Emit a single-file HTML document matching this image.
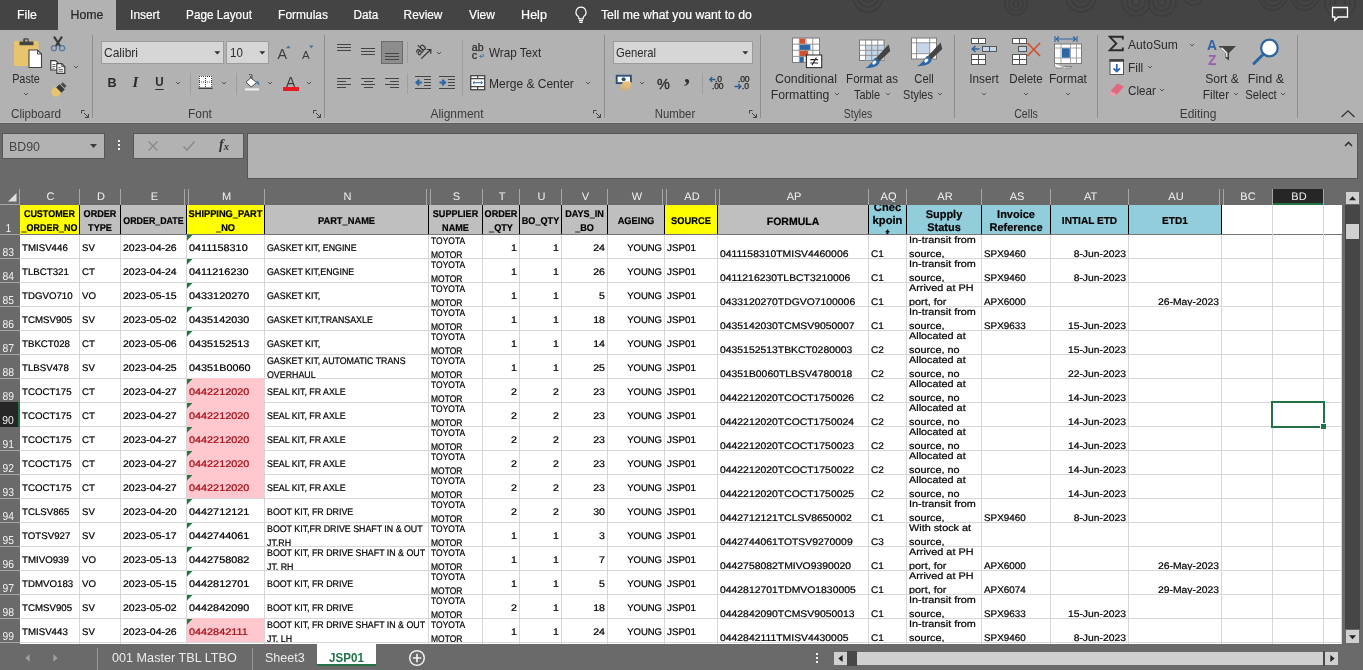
<!DOCTYPE html>
<html><head><meta charset="utf-8"><title>Excel</title>
<style>
*{box-sizing:border-box;margin:0;padding:0}
html,body{width:1363px;height:670px;overflow:hidden;background:#6a6a6a;font-family:"Liberation Sans",sans-serif}
.a{position:absolute}
#root{position:relative;width:1363px;height:670px;overflow:hidden;background:#6a6a6a;will-change:transform}
/* grid */
.ch{text-rendering:geometricPrecision;padding-left:2px;height:17px;line-height:19px;color:#f2f2f2;font-size:11px;text-align:center}
.rh{text-rendering:geometricPrecision;width:20px;color:#f2f2f2;font-size:11.5px;text-align:center;overflow:hidden}
.rh span{position:absolute;left:-4px;right:-0.6px;bottom:0px;line-height:12px;transform:scaleX(.9)}
.c{text-rendering:geometricPrecision;font-size:9.6px;color:#000;-webkit-text-stroke:0.22px currentColor;overflow:hidden;white-space:nowrap}
.c span{position:absolute;left:2px;right:2px;line-height:14px}
.c.l span{text-align:left;transform-origin:left center}
.c.r span{text-align:right;transform-origin:right center}
.c.m span{top:13.6px;transform:translateY(-50%) scaleX(var(--k))}
.c.b span{bottom:-4.4px;transform:scaleX(var(--k))}
.c.s{font-size:9.6px}
.c.pk{color:#a40c14}
.h1{text-rendering:geometricPrecision;-webkit-text-stroke:0.2px #000;font-weight:bold;text-align:center;color:#000;overflow:hidden;border-right:1px solid #000;white-space:nowrap}
.h1 span{position:absolute;left:-40px;right:-40px;top:calc(50% + var(--dy,1px) + 1px);transform:translateY(-50%) scaleX(var(--k));line-height:var(--lh,14px)}
/* top */
.tab{-webkit-text-stroke:0.2px currentColor;top:0px;height:30px;line-height:30px;color:#fff;font-size:12.3px;text-align:center;white-space:nowrap}
.rt{font-size:12.2px;color:#2b2b2b;white-space:nowrap;line-height:16px}
.gl{font-size:12.2px;color:#3b3b3b;white-space:nowrap;text-align:center;line-height:16px}
.vsep{width:1px;background:#8f8f8f}
.chev{width:7px;height:4px}
</style></head><body><div id="root">
<!-- tab bar -->
<div class="a" style="left:0;top:0;width:1363px;height:30px;background:#444"></div>
<svg class="a" style="left:840px;top:0px" width="523" height="30" viewBox="0 0 523 30"><g transform="translate(-840,0)"><circle cx="868" cy="-3" r="5" fill="none" stroke="#3d3d3d" stroke-width="1.6"/><circle cx="868" cy="-3" r="10" fill="none" stroke="#3d3d3d" stroke-width="1.6"/><circle cx="868" cy="-3" r="15" fill="none" stroke="#3d3d3d" stroke-width="1.6"/><circle cx="1016" cy="4" r="3" fill="none" stroke="#3d3d3d" stroke-width="1.6"/><circle cx="1016" cy="4" r="7" fill="none" stroke="#3d3d3d" stroke-width="1.6"/><circle cx="1016" cy="4" r="11" fill="none" stroke="#3d3d3d" stroke-width="1.6"/><circle cx="1081" cy="-3" r="5" fill="none" stroke="#3d3d3d" stroke-width="1.6"/><circle cx="1081" cy="-3" r="10" fill="none" stroke="#3d3d3d" stroke-width="1.6"/><circle cx="1081" cy="-3" r="15" fill="none" stroke="#3d3d3d" stroke-width="1.6"/><circle cx="1136" cy="2" r="4" fill="none" stroke="#3d3d3d" stroke-width="1.6"/><circle cx="1136" cy="2" r="9" fill="none" stroke="#3d3d3d" stroke-width="1.6"/><circle cx="1136" cy="2" r="14" fill="none" stroke="#3d3d3d" stroke-width="1.6"/><circle cx="1162" cy="2" r="4" fill="none" stroke="#3d3d3d" stroke-width="1.6"/><circle cx="1162" cy="2" r="9" fill="none" stroke="#3d3d3d" stroke-width="1.6"/><circle cx="1162" cy="2" r="14" fill="none" stroke="#3d3d3d" stroke-width="1.6"/><circle cx="1193" cy="-5" r="5" fill="none" stroke="#3d3d3d" stroke-width="1.6"/><circle cx="1193" cy="-5" r="10" fill="none" stroke="#3d3d3d" stroke-width="1.6"/><circle cx="1273" cy="-4" r="5" fill="none" stroke="#3d3d3d" stroke-width="1.6"/><circle cx="1273" cy="-4" r="10" fill="none" stroke="#3d3d3d" stroke-width="1.6"/><circle cx="1273" cy="-4" r="14" fill="none" stroke="#3d3d3d" stroke-width="1.6"/><circle cx="1305" cy="-4" r="5" fill="none" stroke="#3d3d3d" stroke-width="1.6"/><circle cx="1305" cy="-4" r="10" fill="none" stroke="#3d3d3d" stroke-width="1.6"/><circle cx="1305" cy="-4" r="14" fill="none" stroke="#3d3d3d" stroke-width="1.6"/><circle cx="1340" cy="3" r="5" fill="none" stroke="#3d3d3d" stroke-width="1.6"/><circle cx="1340" cy="3" r="10" fill="none" stroke="#3d3d3d" stroke-width="1.6"/><circle cx="1340" cy="3" r="15" fill="none" stroke="#3d3d3d" stroke-width="1.6"/></g></svg>
<div class="a" style="left:58px;top:0;width:58px;height:30px;background:#b2b2b2"></div>
<div class="a tab" style="left:-23.5px;width:100px;color:#fff;transform:scaleX(0.999)">File</div>
<div class="a tab" style="left:37px;width:100px;color:#262626;transform:scaleX(1.000)">Home</div>
<div class="a tab" style="left:94.5px;width:100px;color:#fff;transform:scaleX(0.969)">Insert</div>
<div class="a tab" style="left:168.5px;width:100px;color:#fff;transform:scaleX(0.953)">Page Layout</div>
<div class="a tab" style="left:252.5px;width:100px;color:#fff;transform:scaleX(0.972)">Formulas</div>
<div class="a tab" style="left:316px;width:100px;color:#fff;transform:scaleX(0.954)">Data</div>
<div class="a tab" style="left:373px;width:100px;color:#fff;transform:scaleX(0.962)">Review</div>
<div class="a tab" style="left:431.5px;width:100px;color:#fff;transform:scaleX(0.976)">View</div>
<div class="a tab" style="left:483.5px;width:100px;color:#fff;transform:scaleX(1.020)">Help</div>
<div class="a tab" style="left:600.6px;width:170px;text-align:left;white-space:nowrap;transform:scaleX(0.994);transform-origin:left">Tell me what you want to do</div>
<svg class="a" style="left:573px;top:6px" width="16" height="18" viewBox="0 0 16 18"><path d="M8 1.2a5 5 0 0 0-3 9c.6.6.9 1.2.9 2v.6h4.2v-.6c0-.8.3-1.4.9-2a5 5 0 0 0-3-9z" fill="none" stroke="#fff" stroke-width="1.2"/><path d="M6 14.6h4M6.4 16.4h3.2" stroke="#fff" stroke-width="1.1"/></svg>
<svg class="a" style="left:1331px;top:6px" width="18" height="16" viewBox="0 0 18 16"><path d="M1.5 1.5H16.5V11H7L3.8 14.3V11H1.5Z" fill="none" stroke="#fff" stroke-width="1.3"/></svg>
<!-- ribbon -->
<div class="a" style="left:0;top:30px;width:1363px;height:93px;background:#b2b2b2"></div>
<div class="a" style="left:0;top:122px;width:1363px;height:1px;background:#bbbbbb"></div>
<div class="a" style="left:92px;top:35px;width:1px;height:83px;background:#8e8e8e"></div>
<div class="a" style="left:324px;top:35px;width:1px;height:83px;background:#8e8e8e"></div>
<div class="a" style="left:604px;top:35px;width:1px;height:83px;background:#8e8e8e"></div>
<div class="a" style="left:760px;top:35px;width:1px;height:83px;background:#8e8e8e"></div>
<div class="a" style="left:954px;top:35px;width:1px;height:83px;background:#8e8e8e"></div>
<div class="a" style="left:1097px;top:35px;width:1px;height:83px;background:#8e8e8e"></div>
<div class="a" style="left:1297px;top:35px;width:1px;height:83px;background:#8e8e8e"></div>
<div class="a gl" style="left:-23.6px;width:120px;text-align:center;top:106.3px;transform:scaleX(0.960);">Clipboard</div>
<div class="a gl" style="left:140.3px;width:120px;text-align:center;top:106.3px;transform:scaleX(0.980);">Font</div>
<div class="a gl" style="left:396.8px;width:120px;text-align:center;top:106.3px;transform:scaleX(0.980);">Alignment</div>
<div class="a gl" style="left:614.5px;width:120px;text-align:center;top:106.3px;transform:scaleX(0.934);">Number</div>
<div class="a gl" style="left:797.6px;width:120px;text-align:center;top:106.3px;transform:scaleX(0.852);">Styles</div>
<div class="a gl" style="left:966px;width:120px;text-align:center;top:106.3px;transform:scaleX(0.871);">Cells</div>
<div class="a gl" style="left:1137.5px;width:120px;text-align:center;top:106.3px;transform:scaleX(0.985);">Editing</div>
<svg class="a" style="left:81px;top:110px" width="9" height="9"><path d="M0.5 3.5V0.5H3.5M3 3L7.5 7.5M7.5 4V7.5H4" stroke="#444" stroke-width="1" fill="none"/></svg>
<svg class="a" style="left:313px;top:110px" width="9" height="9"><path d="M0.5 3.5V0.5H3.5M3 3L7.5 7.5M7.5 4V7.5H4" stroke="#444" stroke-width="1" fill="none"/></svg>
<svg class="a" style="left:593px;top:110px" width="9" height="9"><path d="M0.5 3.5V0.5H3.5M3 3L7.5 7.5M7.5 4V7.5H4" stroke="#444" stroke-width="1" fill="none"/></svg>
<svg class="a" style="left:749px;top:110px" width="9" height="9"><path d="M0.5 3.5V0.5H3.5M3 3L7.5 7.5M7.5 4V7.5H4" stroke="#444" stroke-width="1" fill="none"/></svg>
<svg class="a" style="left:1340px;top:109px" width="16" height="10" viewBox="0 0 16 10"><path d="M1.5 8L8 1.8L14.5 8" stroke="#333" stroke-width="1.3" fill="none"/></svg>
<svg class="a" style="left:12px;top:36px" width="32" height="34" viewBox="0 0 32 34"><rect x="2" y="5" width="24.5" height="25" rx="1" fill="#e9c46e"/><path d="M7.5 9.3V5.6H11.3V3.2a1 1 0 0 1 1-1h3.4a1 1 0 0 1 1 1V5.6H21.5V9.3Z" fill="#444"/><rect x="13" y="3.6" width="2.6" height="1.8" fill="#b2b2b2"/><path d="M17 14H25.5L29.5 18V31.5H17Z" fill="#fff" stroke="#444" stroke-width="1.1"/><path d="M25.5 14V18H29.5" fill="none" stroke="#444" stroke-width="1"/></svg>
<div class="a rt" style="left:-33.7px;width:120px;text-align:center;top:71.3px;transform:scaleX(0.889);">Paste</div>
<svg class="a" style="left:22.3px;top:91px" width="8" height="6"><path d="M1.900 1.900L4 4L6.100 1.900" stroke="#555" stroke-width="1" fill="none"/></svg>
<svg class="a" style="left:49px;top:35px" width="18" height="18" viewBox="0 0 18 18"><path d="M5 1.600L11.300 11.400M13 1.600L6.700 11.400" stroke="#3a3a3a" stroke-width="2.100" fill="none"/><circle cx="4.900" cy="13.200" r="2.500" fill="none" stroke="#54789e" stroke-width="1.300"/><circle cx="13.100" cy="13.200" r="2.500" fill="none" stroke="#54789e" stroke-width="1.300"/></svg>
<svg class="a" style="left:49px;top:59px" width="18" height="16" viewBox="0 0 18 16"><path d="M1.800 1.600H6.600L9.400 4.400V11H1.800Z" fill="#fff" stroke="#3a3a3a" stroke-width="1.200"/><path d="M3.400 5.500H6.400M3.400 7.500H6.400M3.400 9.300H5.400" stroke="#3a3a3a" stroke-width="0.800"/><path d="M7.800 4.700H12.800L15.800 7.700V14.400H7.800Z" fill="#fff" stroke="#3a3a3a" stroke-width="1.200"/><path d="M12.800 4.700V7.700H15.800" fill="none" stroke="#3a3a3a" stroke-width="0.900"/><path d="M9.400 8.600H11.600M9.400 10.400H14.200M9.400 12.200H14.200" stroke="#3a3a3a" stroke-width="0.800"/></svg>
<svg class="a" style="left:72px;top:64px" width="8" height="6"><path d="M1.900 1.900L4 4L6.100 1.900" stroke="#555" stroke-width="1" fill="none"/></svg>
<svg class="a" style="left:50px;top:81px" width="18" height="18" viewBox="0 0 18 18"><circle cx="6" cy="11" r="4.700" fill="#e9c46e"/><path d="M9.600 3.200L14.800 8.400L11.400 11.800L6.200 6.600Z" fill="#3a3a3a"/><path d="M12.800 1.200L16.600 5L14.600 7L10.800 3.200Z" fill="#46504a"/></svg>
<div class="a" style="left:101px;top:41px;width:123px;height:23px;background:#d6d6d6;border:1px solid #9b9b9b"></div>
<div class="a rt" style="left:104.4px;top:44.9px;transform:scaleX(0.984);transform-origin:left;">Calibri</div>
<svg class="a" style="left:213.5px;top:51px" width="7" height="4"><path d="M0.300 0.300H6.300L3.300 3.600Z" fill="#333"/></svg>
<div class="a" style="left:226px;top:41px;width:43px;height:23px;background:#d6d6d6;border:1px solid #9b9b9b"></div>
<div class="a rt" style="left:229.6px;top:44.9px;transform:scaleX(0.944);transform-origin:left;">10</div>
<svg class="a" style="left:258.5px;top:51px" width="7" height="4"><path d="M0.300 0.300H6.300L3.300 3.600Z" fill="#333"/></svg>
<div class="a" style="left:277.500px;top:44.500px;font-size:14.300px;line-height:18px;color:#3b3b3b">A</div>
<svg class="a" style="left:285.5px;top:44.5px" width="5" height="4" viewBox="0 0 5 4"><path d="M0 3.300H4.600L2.300 0.400Z" fill="#41719c"/></svg>
<div class="a" style="left:302px;top:47.500px;font-size:11.500px;line-height:14px;color:#3b3b3b">A</div>
<svg class="a" style="left:309.2px;top:44.5px" width="5" height="4" viewBox="0 0 5 4"><path d="M0 0.400H4.600L2.300 3.300Z" fill="#41719c"/></svg>
<div class="a" style="left:107.500px;top:75px;font-size:12.600px;font-weight:bold;line-height:16px;color:#2b2b2b">B</div>
<div class="a" style="left:132.500px;top:74px;font-family:'Liberation Serif',serif;font-size:15px;font-style:italic;font-weight:bold;line-height:16px;color:#2b2b2b">I</div>
<div class="a" style="left:155px;top:75.500px;font-size:12.600px;font-weight:bold;line-height:13px;color:#2b2b2b;border-bottom:1.3px solid #2b2b2b;padding:0 0px;transform:scaleX(.92)">U</div>
<svg class="a" style="left:174px;top:80px" width="8" height="6"><path d="M1.900 1.900L4 4L6.100 1.900" stroke="#555" stroke-width="1" fill="none"/></svg>
<div class="a" style="left:190px;top:73px;width:1px;height:22px;background:#9e9e9e"></div>
<svg class="a" style="left:198px;top:75px" width="15" height="15" viewBox="0 0 15 15"><rect x="1" y="1" width="13" height="12" fill="#fff"/><path d="M1 1.5H14M1.5 1V13M13.5 1V13M7.5 1V13M1 7H14" stroke="#444" stroke-width="1" stroke-dasharray="1 1" fill="none"/><path d="M0.5 13.2H14.5" stroke="#333" stroke-width="1.4"/></svg>
<svg class="a" style="left:220px;top:80px" width="8" height="6"><path d="M1.900 1.900L4 4L6.100 1.900" stroke="#555" stroke-width="1" fill="none"/></svg>
<div class="a" style="left:236px;top:73px;width:1px;height:22px;background:#9e9e9e"></div>
<svg class="a" style="left:244px;top:74px" width="18" height="18" viewBox="0 0 18 18"><path d="M6.5 2.2V5" stroke="#444" stroke-width="1.1" fill="none"/><path d="M5 1.2a1.6 1.6 0 0 1 3 0V5" stroke="#444" stroke-width="1" fill="none"/><path d="M6.8 3.8L12.6 8.6L7.2 13L2 8.2Z" fill="#fff" stroke="#444" stroke-width="1"/><path d="M12.8 6.6c1.8 .6 3 2.6 2.4 5c-.9-1.2-1.5-1.9-2.6-2.7Z" fill="#3f78ad"/><rect x="1" y="14.3" width="14" height="2.2" fill="#efefef"/></svg>
<svg class="a" style="left:266px;top:80px" width="8" height="6"><path d="M1.900 1.900L4 4L6.100 1.900" stroke="#555" stroke-width="1" fill="none"/></svg>
<div class="a" style="left:286px;top:73.5px;font-size:14px;line-height:16px;color:#3b3b3b">A</div>
<div class="a" style="left:283px;top:87px;width:16px;height:4px;background:#e81b23"></div>
<svg class="a" style="left:305px;top:80px" width="8" height="6"><path d="M1.900 1.900L4 4L6.100 1.900" stroke="#555" stroke-width="1" fill="none"/></svg>
<div class="a" style="left:337px;top:44px;width:14px;height:1px;background:#444"></div><div class="a" style="left:337px;top:47px;width:14px;height:1px;background:#444"></div><div class="a" style="left:337px;top:50px;width:14px;height:1px;background:#444"></div>
<div class="a" style="left:361px;top:48px;width:14px;height:1px;background:#444"></div><div class="a" style="left:361px;top:51px;width:14px;height:1px;background:#444"></div><div class="a" style="left:361px;top:54px;width:14px;height:1px;background:#444"></div>
<div class="a" style="left:381px;top:41px;width:22px;height:23px;background:#8d8d8d;border:1px solid #6b6b6b"></div>
<div class="a" style="left:385px;top:53px;width:14px;height:1px;background:#444"></div><div class="a" style="left:385px;top:56px;width:14px;height:1px;background:#444"></div><div class="a" style="left:385px;top:59px;width:14px;height:1px;background:#444"></div>
<div class="a" style="left:407px;top:42px;width:1px;height:21px;background:#9e9e9e"></div>
<svg class="a" style="left:413px;top:41px" width="21" height="21" viewBox="0 0 21 21"><text x="0" y="0" font-family="Liberation Sans" font-size="11" fill="#2b2b2b" stroke="#2b2b2b" stroke-width="0.250" transform="translate(6.200 15) rotate(-47)" textLength="11.500" lengthAdjust="spacingAndGlyphs">ab</text><path d="M8.300 17.600L17.500 8.800M13.600 8.500H17.800V12.700" stroke="#333" stroke-width="1.200" fill="none"/></svg>
<svg class="a" style="left:435px;top:49.5px" width="8" height="6"><path d="M1.900 1.900L4 4L6.100 1.900" stroke="#555" stroke-width="1" fill="none"/></svg>
<div class="a" style="left:462px;top:40px;width:1px;height:56px;background:#9e9e9e"></div>
<svg class="a" style="left:471px;top:42px" width="15" height="19" viewBox="0 0 15 19"><text x="0.800" y="8.900" font-family="Liberation Sans" font-size="10.800" fill="#2b2b2b" stroke="#2b2b2b" stroke-width="0.250" textLength="11.800" lengthAdjust="spacingAndGlyphs">ab</text><text x="0.800" y="16.600" font-family="Liberation Sans" font-size="10.800" fill="#2b2b2b" stroke="#2b2b2b" stroke-width="0.250">c</text><path d="M12.300 11.800V14.400H8.800M10.200 12.900L8.600 14.400L10.200 15.900" stroke="#41719c" stroke-width="0.900" fill="none"/></svg>
<div class="a rt" style="left:489.3px;top:44.9px;transform:scaleX(0.959);transform-origin:left;">Wrap Text</div>
<div class="a" style="left:337px;top:78px;width:14px;height:1px;background:#444"></div><div class="a" style="left:337px;top:81px;width:9px;height:1px;background:#444"></div><div class="a" style="left:337px;top:84px;width:14px;height:1px;background:#444"></div><div class="a" style="left:337px;top:87px;width:9px;height:1px;background:#444"></div>
<div class="a" style="left:361.0px;top:78px;width:14px;height:1px;background:#444"></div><div class="a" style="left:363.5px;top:81px;width:9px;height:1px;background:#444"></div><div class="a" style="left:361.0px;top:84px;width:14px;height:1px;background:#444"></div><div class="a" style="left:363.5px;top:87px;width:9px;height:1px;background:#444"></div>
<div class="a" style="left:385px;top:78px;width:14px;height:1px;background:#444"></div><div class="a" style="left:390px;top:81px;width:9px;height:1px;background:#444"></div><div class="a" style="left:385px;top:84px;width:14px;height:1px;background:#444"></div><div class="a" style="left:390px;top:87px;width:9px;height:1px;background:#444"></div>
<div class="a" style="left:407px;top:73px;width:1px;height:21px;background:#9e9e9e"></div>
<div class="a" style="left:415px;top:76px;width:16px;height:1px;background:#444"></div><div class="a" style="left:423.5px;top:79px;width:7.5px;height:1px;background:#444"></div><div class="a" style="left:423.5px;top:82px;width:7.5px;height:1px;background:#444"></div><div class="a" style="left:423.5px;top:85px;width:7.5px;height:1px;background:#444"></div><div class="a" style="left:415px;top:88px;width:16px;height:1px;background:#444"></div>
<svg class="a" style="left:415px;top:78px" width="8" height="9" viewBox="0 0 8 9"><path d="M7 4.500H2M4.300 1.600L1.400 4.500L4.300 7.400" stroke="#2d66a5" stroke-width="2" fill="none"/></svg>
<div class="a" style="left:439px;top:76px;width:16px;height:1px;background:#444"></div><div class="a" style="left:447.5px;top:79px;width:7.5px;height:1px;background:#444"></div><div class="a" style="left:447.5px;top:82px;width:7.5px;height:1px;background:#444"></div><div class="a" style="left:447.5px;top:85px;width:7.5px;height:1px;background:#444"></div><div class="a" style="left:439px;top:88px;width:16px;height:1px;background:#444"></div>
<svg class="a" style="left:439px;top:78px" width="8" height="9" viewBox="0 0 8 9"><path d="M0.500 4.500H5.500M3.200 1.600L6.100 4.500L3.200 7.400" stroke="#2d66a5" stroke-width="2" fill="none"/></svg>
<svg class="a" style="left:470px;top:75px" width="16" height="16" viewBox="0 0 16 16"><rect x="0.700" y="0.700" width="14" height="14" fill="#fff" stroke="#444" stroke-width="1.300"/><path d="M0.700 3.700H14.700M0.700 11.700H14.700M7.700 0.700V3.700M7.700 11.700V14.700" stroke="#444" stroke-width="1.200" fill="none"/><path d="M3 7.700H12.400M4.600 6.200L3 7.700L4.600 9.200M10.800 6.200L12.400 7.700L10.800 9.200" stroke="#2d66a5" stroke-width="1" fill="none"/></svg>
<div class="a rt" style="left:489.3px;top:76.3px;transform:scaleX(0.986);transform-origin:left;">Merge &amp; Center</div>
<svg class="a" style="left:584px;top:80px" width="8" height="6"><path d="M1.900 1.900L4 4L6.100 1.900" stroke="#555" stroke-width="1" fill="none"/></svg>
<div class="a" style="left:613px;top:41px;width:140px;height:23px;background:#d6d6d6;border:1px solid #9b9b9b"></div>
<div class="a rt" style="left:616.4px;top:44.9px;transform:scaleX(0.925);transform-origin:left;">General</div>
<svg class="a" style="left:742px;top:51px" width="7" height="4"><path d="M0.300 0.300H6.300L3.300 3.600Z" fill="#333"/></svg>
<svg class="a" style="left:615px;top:74px" width="19" height="19" viewBox="0 0 19 19"><rect x="1.700" y="1.700" width="14.200" height="7.400" fill="#fff" stroke="#2c4f7c" stroke-width="1.900"/><circle cx="8.600" cy="5.300" r="2" fill="#2c4f7c"/><ellipse cx="12" cy="9.600" rx="4.800" ry="2.300" fill="#e9bf7c"/><ellipse cx="10.600" cy="12.400" rx="5" ry="2.300" fill="#e6ba74" opacity=".9"/><ellipse cx="9.400" cy="15" rx="4.400" ry="1.900" fill="#dcae66" opacity=".55"/></svg>
<svg class="a" style="left:638px;top:80px" width="8" height="6"><path d="M1.900 1.900L4 4L6.100 1.900" stroke="#555" stroke-width="1" fill="none"/></svg>
<div class="a" style="left:657px;top:74px;font-size:15.500px;line-height:20px;color:#2b2b2b;-webkit-text-stroke:0.350px #2b2b2b;transform:scaleX(.93);transform-origin:left">%</div>
<div class="a" style="left:684px;top:62px;font-family:'Liberation Serif',serif;font-size:24px;font-weight:bold;line-height:24px;color:#2f2f2f">,</div>
<div class="a" style="left:702px;top:73px;width:1px;height:21px;background:#9e9e9e"></div>
<div class="a" style="left:715px;top:75px;font-size:8.600px;line-height:9px;color:#262626;letter-spacing:-0.200px;-webkit-text-stroke:0.250px #262626">.0</div><div class="a" style="left:712px;top:81.5px;font-size:8.600px;line-height:9px;color:#262626;letter-spacing:-0.200px;-webkit-text-stroke:0.250px #262626">.00</div>
<svg class="a" style="left:709px;top:76px" width="7" height="7" viewBox="0 0 7 7"><path d="M6.5 3.5H1M3.2 1L0.8 3.5L3.2 6" stroke="#2b5c98" stroke-width="1.300" fill="none"/></svg>
<div class="a" style="left:738px;top:75px;font-size:8.600px;line-height:9px;color:#262626;letter-spacing:-0.200px;-webkit-text-stroke:0.250px #262626">.00</div><div class="a" style="left:742px;top:81.5px;font-size:8.600px;line-height:9px;color:#262626;letter-spacing:-0.200px;-webkit-text-stroke:0.250px #262626">.0</div>
<svg class="a" style="left:734px;top:82.5px" width="8" height="7" viewBox="0 0 8 7"><path d="M0.5 3.5H6.5M4.3 1L6.8 3.5L4.3 6" stroke="#2b5c98" stroke-width="1.300" fill="none"/></svg>
<svg class="a" style="left:792px;top:37px" width="31" height="32" viewBox="0 0 31 32"><rect x="0.5" y="1" width="27" height="24.5" fill="#fff" stroke="#7a7a7a" stroke-width="1"/><path d="M0.5 7.2H27.5M0.5 13.3H27.5M0.5 19.4H27.5M7.3 1V25.5M14 1V25.5M20.8 1V25.5" stroke="#8a8a8a" stroke-width="0.9" fill="none"/><rect x="7.8" y="1.5" width="5.4" height="5.3" fill="#d0512f"/><rect x="7.8" y="7.7" width="10.6" height="5.2" fill="#2d66a5"/><rect x="7.8" y="13.8" width="8.4" height="5.2" fill="#d0512f"/><rect x="7.8" y="19.9" width="4" height="5.2" fill="#2d66a5"/><rect x="14.5" y="18" width="15.2" height="12.6" fill="#fff" stroke="#333" stroke-width="1.1"/><path d="M18.3 22.6H26M18.3 26H26M24.4 20.4L20 28.3" stroke="#222" stroke-width="1.1" fill="none"/></svg>
<div class="a rt" style="left:746.2px;width:120px;text-align:center;top:70.7px;transform:scaleX(1.017);">Conditional</div>
<div class="a rt" style="left:740.3px;width:120px;text-align:center;top:87.4px;transform:scaleX(1.004);">Formatting</div>
<svg class="a" style="left:833.2px;top:91px" width="8" height="6"><path d="M1.900 1.900L4 4L6.100 1.900" stroke="#555" stroke-width="1" fill="none"/></svg>
<svg class="a" style="left:859px;top:39px" width="32" height="30" viewBox="0 0 32 30"><rect x="0.5" y="1" width="24.5" height="20.5" fill="#fff" stroke="#7a7a7a" stroke-width="1"/><rect x="6.6" y="6.2" width="18" height="15" fill="#c5d6ea"/><path d="M0.5 6.2H25M0.5 11.3H25M0.5 16.4H25M6.6 1V21.5M12.7 1V21.5M18.8 1V21.5" stroke="#8a8a8a" stroke-width="0.9" fill="none"/><path d="M29.600 5.500L31.300 12L20.300 22.600L16.800 19.200Z" fill="#444"/><path d="M16.500 18.700L20.800 23c-1.200 3.800-6 6.200-14.800 6.200c4.300-2.200 5.800-4.800 8.300-8.200c.8-1.200 1.500-2 2.200-2.300Z" fill="#2d66a5"/><ellipse cx="15.300" cy="23.6" rx="2.300" ry="1.600" fill="#fff" transform="rotate(-40 15.300 23.6)"/></svg>
<div class="a rt" style="left:812.1px;width:120px;text-align:center;top:70.7px;transform:scaleX(0.944);">Format as</div>
<div class="a rt" style="left:807.2px;width:120px;text-align:center;top:87.4px;transform:scaleX(0.896);">Table</div>
<svg class="a" style="left:883.5px;top:91px" width="8" height="6"><path d="M1.900 1.900L4 4L6.100 1.900" stroke="#555" stroke-width="1" fill="none"/></svg>
<svg class="a" style="left:911px;top:37px" width="32" height="31" viewBox="0 0 32 31"><rect x="0.5" y="1" width="25" height="21" fill="#fff" stroke="#7a7a7a" stroke-width="1"/><rect x="5.600" y="6" width="13" height="10.500" fill="#c5d6ea"/><path d="M0.5 5.8H25.5M0.5 16.700H25.5M5.5 1V22M18.700 1V22" stroke="#8a8a8a" stroke-width="0.9" fill="none"/><path d="M29.600 5.500L31.300 12L20.300 22.600L16.800 19.200Z" fill="#444"/><path d="M16.500 18.700L20.800 23c-1.200 3.800-6 6.200-14.800 6.200c4.300-2.200 5.800-4.800 8.300-8.200c.8-1.200 1.500-2 2.200-2.300Z" fill="#2d66a5"/><ellipse cx="15.300" cy="23.6" rx="2.300" ry="1.600" fill="#fff" transform="rotate(-40 15.300 23.6)"/></svg>
<div class="a rt" style="left:864.2px;width:120px;text-align:center;top:70.7px;transform:scaleX(0.919);">Cell</div>
<div class="a rt" style="left:858px;width:120px;text-align:center;top:87.4px;transform:scaleX(0.898);">Styles</div>
<svg class="a" style="left:936.3px;top:91px" width="8" height="6"><path d="M1.900 1.900L4 4L6.100 1.900" stroke="#555" stroke-width="1" fill="none"/></svg>
<svg class="a" style="left:970px;top:37px" width="29" height="29" viewBox="0 0 29 29"><rect x="1.5" y="1.5" width="7" height="5" fill="#fff" stroke="#555" stroke-width="1"/><rect x="8.5" y="1.5" width="7" height="5" fill="#fff" stroke="#555" stroke-width="1"/><rect x="12.5" y="9.5" width="7" height="5" fill="#c5d6ea" stroke="#555" stroke-width="1"/><rect x="19.5" y="9.5" width="7" height="5" fill="#c5d6ea" stroke="#555" stroke-width="1"/><rect x="1.5" y="17.5" width="7" height="5" fill="#fff" stroke="#555" stroke-width="1"/><rect x="8.5" y="17.5" width="7" height="5" fill="#fff" stroke="#555" stroke-width="1"/><rect x="1.5" y="22.5" width="7" height="5" fill="#fff" stroke="#555" stroke-width="1"/><rect x="8.5" y="22.5" width="7" height="5" fill="#fff" stroke="#555" stroke-width="1"/><path d="M9.500 12H2.500M5.500 9L2.300 12L5.500 15" stroke="#2d66a5" stroke-width="1.6" fill="none"/></svg>
<div class="a rt" style="left:923.7px;width:120px;text-align:center;top:70.7px;transform:scaleX(0.964);">Insert</div>
<svg class="a" style="left:979.7px;top:91px" width="8" height="6"><path d="M1.900 1.900L4 4L6.100 1.900" stroke="#555" stroke-width="1" fill="none"/></svg>
<svg class="a" style="left:1011px;top:37px" width="31" height="29" viewBox="0 0 31 29"><rect x="1.5" y="1.5" width="7" height="5" fill="#fff" stroke="#555" stroke-width="1"/><rect x="8.5" y="1.5" width="7" height="5" fill="#fff" stroke="#555" stroke-width="1"/><rect x="7.5" y="9.5" width="8" height="5" fill="#c5d6ea" stroke="#555" stroke-width="1"/><rect x="1.5" y="17.5" width="7" height="5" fill="#fff" stroke="#555" stroke-width="1"/><rect x="8.5" y="17.5" width="7" height="5" fill="#fff" stroke="#555" stroke-width="1"/><rect x="1.5" y="22.5" width="7" height="5" fill="#fff" stroke="#555" stroke-width="1"/><rect x="8.5" y="22.5" width="7" height="5" fill="#fff" stroke="#555" stroke-width="1"/><path d="M16.500 6L29 19M29 6L16.500 19" stroke="#d0512f" stroke-width="1.700" fill="none"/></svg>
<div class="a rt" style="left:965.7px;width:120px;text-align:center;top:70.7px;transform:scaleX(0.948);">Delete</div>
<svg class="a" style="left:1022px;top:91px" width="8" height="6"><path d="M1.900 1.900L4 4L6.100 1.900" stroke="#555" stroke-width="1" fill="none"/></svg>
<svg class="a" style="left:1053px;top:35px" width="31" height="34" viewBox="0 0 31 34"><path d="M2 1V7M24 1V7M3 4H23M6 1.500L3.200 4L6 6.500M20 1.500L22.800 4L20 6.500" stroke="#2d66a5" stroke-width="1.100" fill="none"/><rect x="1.5" y="9" width="27" height="19.500" fill="#fff" stroke="#7a7a7a" stroke-width="1"/><path d="M1.5 13H28.500M1.5 23H28.500M8 9V28.500M17.500 9V28.500M23.500 9V28.500" stroke="#9a9a9a" stroke-width="0.9" fill="none"/><rect x="9" y="13.300" width="7.800" height="9.400" fill="#2d66a5"/><path d="M1.5 28.500V31.500L4 33H9.500L11 31.500H19L17.500 33H12" fill="#fff" stroke="#7a7a7a" stroke-width="0.9"/></svg>
<div class="a rt" style="left:1008.0999999999999px;width:120px;text-align:center;top:70.7px;transform:scaleX(0.982);">Format</div>
<svg class="a" style="left:1063.8px;top:91px" width="8" height="6"><path d="M1.900 1.900L4 4L6.100 1.900" stroke="#555" stroke-width="1" fill="none"/></svg>
<svg class="a" style="left:1108px;top:35px" width="17" height="17" viewBox="0 0 17 17"><path d="M14.800 4.500V1.800H1.800L8.300 8.500L1.800 15.200H14.800V12.500" stroke="#2b2b2b" stroke-width="1.900" fill="none" stroke-linejoin="miter"/></svg>
<div class="a rt" style="left:1127.6px;top:37.3px;transform:scaleX(0.993);transform-origin:left;">AutoSum</div>
<svg class="a" style="left:1188px;top:41.5px" width="8" height="6"><path d="M1.900 1.900L4 4L6.100 1.900" stroke="#555" stroke-width="1" fill="none"/></svg>
<svg class="a" style="left:1109px;top:58px" width="16" height="18" viewBox="0 0 16 18"><rect x="1" y="2" width="13.500" height="14.500" fill="#fff" stroke="#555" stroke-width="1"/><rect x="0.5" y="1" width="14.500" height="2.800" fill="#444"/><path d="M7.800 6V13.500M4.500 10.300L7.800 13.600L11 10.300" stroke="#2d66a5" stroke-width="1.700" fill="none"/></svg>
<div class="a rt" style="left:1127.6px;top:59.9px;transform:scaleX(0.976);transform-origin:left;">Fill</div>
<svg class="a" style="left:1146px;top:64px" width="8" height="6"><path d="M1.900 1.900L4 4L6.100 1.900" stroke="#555" stroke-width="1" fill="none"/></svg>
<svg class="a" style="left:1109px;top:82px" width="16" height="15" viewBox="0 0 16 15"><path d="M8.500 1.200L14.800 4.800L7.800 12.500L1.500 9Z" fill="#e0697e"/><path d="M1.500 9L7.800 12.500L6.800 13.800H2.500L1 12.200Z" fill="#ee9aa8"/></svg>
<div class="a rt" style="left:1127.6px;top:82.9px;transform:scaleX(0.955);transform-origin:left;">Clear</div>
<svg class="a" style="left:1158px;top:87px" width="8" height="6"><path d="M1.900 1.900L4 4L6.100 1.900" stroke="#555" stroke-width="1" fill="none"/></svg>
<div class="a" style="left:1207px;top:36.500px;font-size:14.500px;font-weight:bold;line-height:16px;color:#2d66a5;transform:scaleX(.95);transform-origin:left">A</div>
<div class="a" style="left:1207.500px;top:51.500px;font-size:14.500px;font-weight:bold;line-height:16px;color:#9a5cb4;transform:scaleX(.95);transform-origin:left">Z</div>
<svg class="a" style="left:1218px;top:45px" width="19" height="17" viewBox="0 0 19 17"><path d="M0.500 1H18L11 8V15.500L7.500 13V8Z" fill="#444"/><path d="M3.500 2.800L8.800 8V12" stroke="#fff" stroke-width="1.300" fill="none"/></svg>
<div class="a rt" style="left:1161.8px;width:120px;text-align:center;top:70.7px;transform:scaleX(0.995);">Sort &amp;</div>
<div class="a rt" style="left:1156.2px;width:120px;text-align:center;top:87.1px;transform:scaleX(0.971);">Filter</div>
<svg class="a" style="left:1231.5px;top:91px" width="8" height="6"><path d="M1.900 1.900L4 4L6.100 1.900" stroke="#555" stroke-width="1" fill="none"/></svg>
<svg class="a" style="left:1251px;top:36px" width="30" height="30" viewBox="0 0 30 30"><circle cx="18.400" cy="12" r="8.300" fill="#fff" stroke="#2b66a3" stroke-width="2.200"/><path d="M12.300 18.200L3 27.500" stroke="#2b66a3" stroke-width="3" stroke-linecap="round"/></svg>
<div class="a rt" style="left:1205.7px;width:120px;text-align:center;top:70.7px;transform:scaleX(1.030);">Find &amp;</div>
<div class="a rt" style="left:1200.7px;width:120px;text-align:center;top:87.1px;transform:scaleX(0.924);">Select</div>
<svg class="a" style="left:1279px;top:91px" width="8" height="6"><path d="M1.900 1.900L4 4L6.100 1.900" stroke="#555" stroke-width="1" fill="none"/></svg>
<!-- formula bar -->
<div class="a" style="left:0;top:123px;width:1363px;height:1px;background:#5e5e5e"></div>
<div class="a" style="left:2px;top:133px;width:103px;height:26px;background:#b2b2b2;border:1px solid #565656"></div>
<div class="a" style="left:9px;top:139px;font-size:13.5px;color:#444;line-height:16px;transform:scaleX(.915);transform-origin:left">BD90</div>
<svg class="a" style="left:90px;top:144px" width="7" height="4"><path d="M0 0H7L3.5 4Z" fill="#3c3c3c"/></svg>
<div class="a" style="left:118px;top:140px;width:2px;height:2px;background:#f0f0f0;box-shadow:0 4px 0 #f0f0f0,0 8px 0 #f0f0f0"></div>
<div class="a" style="left:133px;top:133px;width:111px;height:26px;background:#b2b2b2;border:1px solid #565656"></div>
<svg class="a" style="left:147px;top:140px" width="12" height="12"><path d="M1.5 1.5L10.5 10.5M10.5 1.5L1.5 10.5" stroke="#8a8a8a" stroke-width="1.4" fill="none"/></svg>
<svg class="a" style="left:182px;top:140px" width="14" height="12"><path d="M1.5 6.5L5 10L12.5 1.5" stroke="#8a8a8a" stroke-width="1.6" fill="none"/></svg>
<div class="a" style="left:219px;top:137px;font-family:'Liberation Serif',serif;font-style:italic;font-size:14px;color:#333;line-height:16px;font-weight:bold">f<span style="font-size:10.5px;position:relative;top:1px;left:0px">x</span></div>
<div class="a" style="left:247px;top:133px;width:1111px;height:46px;background:#b2b2b2;border:1px solid #565656"></div>
<svg class="a" style="left:1344px;top:141px" width="9" height="6"><path d="M1 5L4.5 1.5L8 5" stroke="#333" stroke-width="1.6" fill="none"/></svg>
<!-- grid -->
<div class="a" style="left:20px;top:205px;width:1322px;height:439px;background:#fff"></div>
<div class="a ch" style="left:20px;top:188px;width:59px">C</div>
<div class="a ch" style="left:80px;top:188px;width:40px">D</div>
<div class="a ch" style="left:121px;top:188px;width:65px">E</div>
<div class="a ch" style="left:187px;top:188px;width:77px">M</div>
<div class="a ch" style="left:265px;top:188px;width:163px">N</div>
<div class="a ch" style="left:429px;top:188px;width:53px">S</div>
<div class="a ch" style="left:483px;top:188px;width:36px">T</div>
<div class="a ch" style="left:520px;top:188px;width:41px">U</div>
<div class="a ch" style="left:562px;top:188px;width:45px">V</div>
<div class="a ch" style="left:608px;top:188px;width:56px">W</div>
<div class="a ch" style="left:665px;top:188px;width:52px">AD</div>
<div class="a ch" style="left:718px;top:188px;width:150px">AP</div>
<div class="a ch" style="left:869px;top:188px;width:37px">AQ</div>
<div class="a ch" style="left:907px;top:188px;width:74px">AR</div>
<div class="a ch" style="left:982px;top:188px;width:68px">AS</div>
<div class="a ch" style="left:1051px;top:188px;width:77px">AT</div>
<div class="a ch" style="left:1129px;top:188px;width:92px">AU</div>
<div class="a ch" style="left:1222px;top:188px;width:50px">BC</div>
<div class="a ch" style="left:1273px;top:189px;width:50px;height:16px;line-height:17px;background:#262626;border-bottom:2px solid #217346">BD</div>
<div class="a" style="left:19px;top:189px;width:1px;height:16px;background:#a6a6a6"></div>
<div class="a" style="left:79px;top:189px;width:1px;height:16px;background:#a6a6a6"></div>
<div class="a" style="left:120px;top:189px;width:1px;height:16px;background:#a6a6a6"></div>
<div class="a" style="left:186px;top:189px;width:1px;height:16px;background:#a6a6a6"></div>
<div class="a" style="left:264px;top:189px;width:1px;height:16px;background:#a6a6a6"></div>
<div class="a" style="left:428px;top:189px;width:1px;height:16px;background:#a6a6a6"></div>
<div class="a" style="left:482px;top:189px;width:1px;height:16px;background:#a6a6a6"></div>
<div class="a" style="left:519px;top:189px;width:1px;height:16px;background:#a6a6a6"></div>
<div class="a" style="left:561px;top:189px;width:1px;height:16px;background:#a6a6a6"></div>
<div class="a" style="left:607px;top:189px;width:1px;height:16px;background:#a6a6a6"></div>
<div class="a" style="left:664px;top:189px;width:1px;height:16px;background:#a6a6a6"></div>
<div class="a" style="left:717px;top:189px;width:1px;height:16px;background:#a6a6a6"></div>
<div class="a" style="left:868px;top:189px;width:1px;height:16px;background:#a6a6a6"></div>
<div class="a" style="left:906px;top:189px;width:1px;height:16px;background:#a6a6a6"></div>
<div class="a" style="left:981px;top:189px;width:1px;height:16px;background:#a6a6a6"></div>
<div class="a" style="left:1050px;top:189px;width:1px;height:16px;background:#a6a6a6"></div>
<div class="a" style="left:1128px;top:189px;width:1px;height:16px;background:#a6a6a6"></div>
<div class="a" style="left:1221px;top:189px;width:1px;height:16px;background:#a6a6a6"></div>
<div class="a" style="left:1272px;top:189px;width:1px;height:16px;background:#a6a6a6"></div>
<div class="a" style="left:1323px;top:189px;width:1px;height:16px;background:#a6a6a6"></div>
<div class="a" style="left:184px;top:189px;width:1px;height:16px;background:#a6a6a6"></div>
<div class="a" style="left:188px;top:189px;width:1px;height:16px;background:#a6a6a6"></div>
<div class="a" style="left:186px;top:189px;width:1px;height:16px;background:#6a6a6a"></div>
<div class="a" style="left:426px;top:189px;width:1px;height:16px;background:#a6a6a6"></div>
<div class="a" style="left:430px;top:189px;width:1px;height:16px;background:#a6a6a6"></div>
<div class="a" style="left:428px;top:189px;width:1px;height:16px;background:#6a6a6a"></div>
<div class="a" style="left:662px;top:189px;width:1px;height:16px;background:#a6a6a6"></div>
<div class="a" style="left:666px;top:189px;width:1px;height:16px;background:#a6a6a6"></div>
<div class="a" style="left:664px;top:189px;width:1px;height:16px;background:#6a6a6a"></div>
<div class="a" style="left:715px;top:189px;width:1px;height:16px;background:#a6a6a6"></div>
<div class="a" style="left:719px;top:189px;width:1px;height:16px;background:#a6a6a6"></div>
<div class="a" style="left:717px;top:189px;width:1px;height:16px;background:#6a6a6a"></div>
<div class="a" style="left:1219px;top:189px;width:1px;height:16px;background:#a6a6a6"></div>
<div class="a" style="left:1223px;top:189px;width:1px;height:16px;background:#a6a6a6"></div>
<div class="a" style="left:1221px;top:189px;width:1px;height:16px;background:#6a6a6a"></div>
<svg class="a" style="left:8px;top:193px" width="9" height="9"><path d="M8.5 0V8.5H0Z" fill="#dedede"/></svg>
<div class="a" style="left:0;top:204px;width:20px;height:1px;background:#a6a6a6"></div>
<div class="a rh" style="left:0;top:205px;height:30px"><span>1</span></div>
<div class="a" style="left:0;top:234px;width:20px;height:1px;background:#a6a6a6"></div>
<div class="a h1" style="left:20px;top:205px;width:60px;height:29px;background:#ffff00;font-size:9.8px;--k:0.915;--dy:1px;--lh:14px"><span>CUSTOMER<br>_ORDER_NO</span></div>
<div class="a h1" style="left:80px;top:205px;width:41px;height:29px;background:#bfbfbf;font-size:9.8px;--k:0.929;--dy:1px;--lh:14px"><span>ORDER<br>TYPE</span></div>
<div class="a h1" style="left:121px;top:205px;width:66px;height:29px;background:#bfbfbf;font-size:9.8px;--k:0.903;--dy:1px;--lh:14px"><span>ORDER_DATE</span></div>
<div class="a h1" style="left:187px;top:205px;width:78px;height:29px;background:#ffff00;font-size:9.8px;--k:0.944;--dy:1px;--lh:14px"><span>SHIPPING_PART<br>_NO</span></div>
<div class="a h1" style="left:265px;top:205px;width:164px;height:29px;background:#bfbfbf;font-size:9.8px;--k:0.949;--dy:1px;--lh:14px"><span>PART_NAME</span></div>
<div class="a h1" style="left:429px;top:205px;width:54px;height:29px;background:#bfbfbf;font-size:9.8px;--k:0.929;--dy:1px;--lh:14px"><span>SUPPLIER<br>NAME</span></div>
<div class="a h1" style="left:483px;top:205px;width:37px;height:29px;background:#bfbfbf;font-size:9.8px;--k:0.929;--dy:1px;--lh:14px"><span>ORDER<br>_QTY</span></div>
<div class="a h1" style="left:520px;top:205px;width:42px;height:29px;background:#bfbfbf;font-size:9.8px;--k:0.929;--dy:1px;--lh:14px"><span>BO_QTY</span></div>
<div class="a h1" style="left:562px;top:205px;width:46px;height:29px;background:#bfbfbf;font-size:9.8px;--k:0.929;--dy:1px;--lh:14px"><span>DAYS_IN<br>_BO</span></div>
<div class="a h1" style="left:608px;top:205px;width:57px;height:29px;background:#bfbfbf;font-size:9.8px;--k:0.949;--dy:1px;--lh:14px"><span>AGEING</span></div>
<div class="a h1" style="left:665px;top:205px;width:53px;height:29px;background:#ffff00;font-size:9.8px;--k:0.949;--dy:1px;--lh:14px"><span>SOURCE</span></div>
<div class="a h1" style="left:718px;top:205px;width:151px;height:29px;background:#bfbfbf;font-size:10.7px;--k:0.982;--dy:1px;--lh:14px"><span>FORMULA</span></div>
<div class="a h1" style="left:869px;top:205px;width:38px;height:29px;background:#92cddc;font-size:11.2px;--k:1.0;--dy:0px;--lh:13px"><span>Chec<br>kpoin<br>t</span></div>
<div class="a h1" style="left:907px;top:205px;width:75px;height:29px;background:#92cddc;font-size:11.2px;--k:0.98;--dy:1px;--lh:13px"><span>Supply<br>Status</span></div>
<div class="a h1" style="left:982px;top:205px;width:69px;height:29px;background:#92cddc;font-size:11.2px;--k:0.98;--dy:1px;--lh:13px"><span>Invoice<br>Reference</span></div>
<div class="a h1" style="left:1051px;top:205px;width:78px;height:29px;background:#92cddc;font-size:10.2px;--k:0.99;--dy:0px;--lh:13px"><span>INTIAL ETD</span></div>
<div class="a h1" style="left:1129px;top:205px;width:93px;height:29px;background:#92cddc;font-size:10.2px;--k:0.99;--dy:0px;--lh:13px"><span>ETD1</span></div>
<div class="a" style="left:20px;top:234px;width:1322px;height:1px;background:#767676"></div>
<div class="a" style="left:1272px;top:205px;width:1px;height:30px;background:#d5d7db"></div>
<div class="a" style="left:1323px;top:205px;width:1px;height:30px;background:#d5d7db"></div>
<div class="a" style="left:79px;top:235px;width:1px;height:409px;background:#d5d7db"></div>
<div class="a" style="left:120px;top:235px;width:1px;height:409px;background:#d5d7db"></div>
<div class="a" style="left:186px;top:235px;width:1px;height:409px;background:#d5d7db"></div>
<div class="a" style="left:264px;top:235px;width:1px;height:409px;background:#d5d7db"></div>
<div class="a" style="left:428px;top:235px;width:1px;height:409px;background:#d5d7db"></div>
<div class="a" style="left:482px;top:235px;width:1px;height:409px;background:#d5d7db"></div>
<div class="a" style="left:519px;top:235px;width:1px;height:409px;background:#d5d7db"></div>
<div class="a" style="left:561px;top:235px;width:1px;height:409px;background:#d5d7db"></div>
<div class="a" style="left:607px;top:235px;width:1px;height:409px;background:#d5d7db"></div>
<div class="a" style="left:664px;top:235px;width:1px;height:409px;background:#d5d7db"></div>
<div class="a" style="left:717px;top:235px;width:1px;height:409px;background:#d5d7db"></div>
<div class="a" style="left:868px;top:235px;width:1px;height:409px;background:#d5d7db"></div>
<div class="a" style="left:906px;top:235px;width:1px;height:409px;background:#d5d7db"></div>
<div class="a" style="left:981px;top:235px;width:1px;height:409px;background:#d5d7db"></div>
<div class="a" style="left:1050px;top:235px;width:1px;height:409px;background:#d5d7db"></div>
<div class="a" style="left:1128px;top:235px;width:1px;height:409px;background:#d5d7db"></div>
<div class="a" style="left:1221px;top:235px;width:1px;height:409px;background:#d5d7db"></div>
<div class="a" style="left:1272px;top:235px;width:1px;height:409px;background:#d5d7db"></div>
<div class="a" style="left:1323px;top:235px;width:1px;height:409px;background:#d5d7db"></div>
<div class="a" style="left:1341px;top:235px;width:1px;height:409px;background:#d5d7db"></div>
<div class="a" style="left:20px;top:258px;width:1322px;height:1px;background:#d5d7db"></div>
<div class="a" style="left:20px;top:282px;width:1322px;height:1px;background:#d5d7db"></div>
<div class="a" style="left:20px;top:306px;width:1322px;height:1px;background:#d5d7db"></div>
<div class="a" style="left:20px;top:330px;width:1322px;height:1px;background:#d5d7db"></div>
<div class="a" style="left:20px;top:354px;width:1322px;height:1px;background:#d5d7db"></div>
<div class="a" style="left:20px;top:378px;width:1322px;height:1px;background:#d5d7db"></div>
<div class="a" style="left:20px;top:402px;width:1322px;height:1px;background:#d5d7db"></div>
<div class="a" style="left:20px;top:426px;width:1322px;height:1px;background:#d5d7db"></div>
<div class="a" style="left:20px;top:450px;width:1322px;height:1px;background:#d5d7db"></div>
<div class="a" style="left:20px;top:474px;width:1322px;height:1px;background:#d5d7db"></div>
<div class="a" style="left:20px;top:498px;width:1322px;height:1px;background:#d5d7db"></div>
<div class="a" style="left:20px;top:522px;width:1322px;height:1px;background:#d5d7db"></div>
<div class="a" style="left:20px;top:546px;width:1322px;height:1px;background:#d5d7db"></div>
<div class="a" style="left:20px;top:570px;width:1322px;height:1px;background:#d5d7db"></div>
<div class="a" style="left:20px;top:594px;width:1322px;height:1px;background:#d5d7db"></div>
<div class="a" style="left:20px;top:618px;width:1322px;height:1px;background:#d5d7db"></div>
<div class="a" style="left:20px;top:642px;width:1322px;height:1px;background:#d5d7db"></div>
<div class="a rh" style="left:0;top:235px;height:24px"><span>83</span></div>
<div class="a" style="left:0;top:258px;width:20px;height:1px;background:#a6a6a6"></div>
<div class="a c l m" style="left:20px;top:235px;width:59px;height:23px;--k:1.01;"><span>TMISV446</span></div>
<div class="a c l m" style="left:80px;top:235px;width:40px;height:23px;--k:1.01;"><span>SV</span></div>
<div class="a c l m" style="left:121px;top:235px;width:65px;height:23px;--k:1.094;"><span>2023-04-26</span></div>
<div class="a c l m" style="left:187px;top:235px;width:77px;height:23px;--k:1.13;"><span>0411158310</span></div>
<svg class="a" style="left:187px;top:235px" width="6" height="6"><path d="M0 0H5.5L0 5.5Z" fill="#1f7a3c"/></svg>
<div class="a c l m s" style="left:265px;top:235px;width:163px;height:23px;--k:0.92;"><span>GASKET KIT, ENGINE</span></div>
<div class="a c l m s" style="left:429px;top:235px;width:53px;height:23px;--k:0.885;"><span>TOYOTA<br>MOTOR</span></div>
<div class="a c r m" style="left:483px;top:235px;width:36px;height:23px;--k:1.104;"><span>1</span></div>
<div class="a c r m" style="left:520px;top:235px;width:41px;height:23px;--k:1.104;"><span>1</span></div>
<div class="a c r m" style="left:562px;top:235px;width:45px;height:23px;--k:1.104;"><span>24</span></div>
<div class="a c r m" style="left:608px;top:235px;width:56px;height:23px;--k:0.99;"><span>YOUNG</span></div>
<div class="a c l m" style="left:665px;top:235px;width:52px;height:23px;--k:1.021;"><span>JSP01</span></div>
<div class="a c l b" style="left:718px;top:235px;width:150px;height:23px;--k:1.083;"><span>0411158310TMISV4460006</span></div>
<div class="a c l b" style="left:869px;top:235px;width:37px;height:23px;--k:1.042;"><span>C1</span></div>
<div class="a c l b" style="left:907px;top:235px;width:74px;height:23px;--k:1.13;"><span>In-transit from<br>source,</span></div>
<div class="a c l b" style="left:982px;top:235px;width:68px;height:23px;--k:1.031;"><span>SPX9460</span></div>
<div class="a c r b" style="left:1051px;top:235px;width:77px;height:23px;--k:1.078;"><span>8-Jun-2023</span></div>
<div class="a rh" style="left:0;top:259px;height:24px"><span>84</span></div>
<div class="a" style="left:0;top:282px;width:20px;height:1px;background:#a6a6a6"></div>
<div class="a c l m" style="left:20px;top:259px;width:59px;height:23px;--k:1.01;"><span>TLBCT321</span></div>
<div class="a c l m" style="left:80px;top:259px;width:40px;height:23px;--k:1.01;"><span>CT</span></div>
<div class="a c l m" style="left:121px;top:259px;width:65px;height:23px;--k:1.094;"><span>2023-04-24</span></div>
<div class="a c l m" style="left:187px;top:259px;width:77px;height:23px;--k:1.13;"><span>0411216230</span></div>
<svg class="a" style="left:187px;top:259px" width="6" height="6"><path d="M0 0H5.5L0 5.5Z" fill="#1f7a3c"/></svg>
<div class="a c l m s" style="left:265px;top:259px;width:163px;height:23px;--k:0.92;"><span>GASKET KIT,ENGINE</span></div>
<div class="a c l m s" style="left:429px;top:259px;width:53px;height:23px;--k:0.885;"><span>TOYOTA<br>MOTOR</span></div>
<div class="a c r m" style="left:483px;top:259px;width:36px;height:23px;--k:1.104;"><span>1</span></div>
<div class="a c r m" style="left:520px;top:259px;width:41px;height:23px;--k:1.104;"><span>1</span></div>
<div class="a c r m" style="left:562px;top:259px;width:45px;height:23px;--k:1.104;"><span>26</span></div>
<div class="a c r m" style="left:608px;top:259px;width:56px;height:23px;--k:0.99;"><span>YOUNG</span></div>
<div class="a c l m" style="left:665px;top:259px;width:52px;height:23px;--k:1.021;"><span>JSP01</span></div>
<div class="a c l b" style="left:718px;top:259px;width:150px;height:23px;--k:1.083;"><span>0411216230TLBCT3210006</span></div>
<div class="a c l b" style="left:869px;top:259px;width:37px;height:23px;--k:1.042;"><span>C1</span></div>
<div class="a c l b" style="left:907px;top:259px;width:74px;height:23px;--k:1.13;"><span>In-transit from<br>source,</span></div>
<div class="a c l b" style="left:982px;top:259px;width:68px;height:23px;--k:1.031;"><span>SPX9460</span></div>
<div class="a c r b" style="left:1051px;top:259px;width:77px;height:23px;--k:1.078;"><span>8-Jun-2023</span></div>
<div class="a rh" style="left:0;top:283px;height:24px"><span>85</span></div>
<div class="a" style="left:0;top:306px;width:20px;height:1px;background:#a6a6a6"></div>
<div class="a c l m" style="left:20px;top:283px;width:59px;height:23px;--k:1.01;"><span>TDGVO710</span></div>
<div class="a c l m" style="left:80px;top:283px;width:40px;height:23px;--k:1.01;"><span>VO</span></div>
<div class="a c l m" style="left:121px;top:283px;width:65px;height:23px;--k:1.094;"><span>2023-05-15</span></div>
<div class="a c l m" style="left:187px;top:283px;width:77px;height:23px;--k:1.13;"><span>0433120270</span></div>
<svg class="a" style="left:187px;top:283px" width="6" height="6"><path d="M0 0H5.5L0 5.5Z" fill="#1f7a3c"/></svg>
<div class="a c l m s" style="left:265px;top:283px;width:163px;height:23px;--k:0.92;"><span>GASKET KIT,</span></div>
<div class="a c l m s" style="left:429px;top:283px;width:53px;height:23px;--k:0.885;"><span>TOYOTA<br>MOTOR</span></div>
<div class="a c r m" style="left:483px;top:283px;width:36px;height:23px;--k:1.104;"><span>1</span></div>
<div class="a c r m" style="left:520px;top:283px;width:41px;height:23px;--k:1.104;"><span>1</span></div>
<div class="a c r m" style="left:562px;top:283px;width:45px;height:23px;--k:1.104;"><span>5</span></div>
<div class="a c r m" style="left:608px;top:283px;width:56px;height:23px;--k:0.99;"><span>YOUNG</span></div>
<div class="a c l m" style="left:665px;top:283px;width:52px;height:23px;--k:1.021;"><span>JSP01</span></div>
<div class="a c l b" style="left:718px;top:283px;width:150px;height:23px;--k:1.083;"><span>0433120270TDGVO7100006</span></div>
<div class="a c l b" style="left:869px;top:283px;width:37px;height:23px;--k:1.042;"><span>C1</span></div>
<div class="a c l b" style="left:907px;top:283px;width:74px;height:23px;--k:1.13;"><span>Arrived at PH<br>port, for</span></div>
<div class="a c l b" style="left:982px;top:283px;width:68px;height:23px;--k:1.031;"><span>APX6000</span></div>
<div class="a c r b" style="left:1129px;top:283px;width:92px;height:23px;--k:1.078;"><span>26-May-2023</span></div>
<div class="a rh" style="left:0;top:307px;height:24px"><span>86</span></div>
<div class="a" style="left:0;top:330px;width:20px;height:1px;background:#a6a6a6"></div>
<div class="a c l m" style="left:20px;top:307px;width:59px;height:23px;--k:1.01;"><span>TCMSV905</span></div>
<div class="a c l m" style="left:80px;top:307px;width:40px;height:23px;--k:1.01;"><span>SV</span></div>
<div class="a c l m" style="left:121px;top:307px;width:65px;height:23px;--k:1.094;"><span>2023-05-02</span></div>
<div class="a c l m" style="left:187px;top:307px;width:77px;height:23px;--k:1.13;"><span>0435142030</span></div>
<svg class="a" style="left:187px;top:307px" width="6" height="6"><path d="M0 0H5.5L0 5.5Z" fill="#1f7a3c"/></svg>
<div class="a c l m s" style="left:265px;top:307px;width:163px;height:23px;--k:0.92;"><span>GASKET KIT,TRANSAXLE</span></div>
<div class="a c l m s" style="left:429px;top:307px;width:53px;height:23px;--k:0.885;"><span>TOYOTA<br>MOTOR</span></div>
<div class="a c r m" style="left:483px;top:307px;width:36px;height:23px;--k:1.104;"><span>1</span></div>
<div class="a c r m" style="left:520px;top:307px;width:41px;height:23px;--k:1.104;"><span>1</span></div>
<div class="a c r m" style="left:562px;top:307px;width:45px;height:23px;--k:1.104;"><span>18</span></div>
<div class="a c r m" style="left:608px;top:307px;width:56px;height:23px;--k:0.99;"><span>YOUNG</span></div>
<div class="a c l m" style="left:665px;top:307px;width:52px;height:23px;--k:1.021;"><span>JSP01</span></div>
<div class="a c l b" style="left:718px;top:307px;width:150px;height:23px;--k:1.083;"><span>0435142030TCMSV9050007</span></div>
<div class="a c l b" style="left:869px;top:307px;width:37px;height:23px;--k:1.042;"><span>C1</span></div>
<div class="a c l b" style="left:907px;top:307px;width:74px;height:23px;--k:1.13;"><span>In-transit from<br>source,</span></div>
<div class="a c l b" style="left:982px;top:307px;width:68px;height:23px;--k:1.031;"><span>SPX9633</span></div>
<div class="a c r b" style="left:1051px;top:307px;width:77px;height:23px;--k:1.078;"><span>15-Jun-2023</span></div>
<div class="a rh" style="left:0;top:331px;height:24px"><span>87</span></div>
<div class="a" style="left:0;top:354px;width:20px;height:1px;background:#a6a6a6"></div>
<div class="a c l m" style="left:20px;top:331px;width:59px;height:23px;--k:1.01;"><span>TBKCT028</span></div>
<div class="a c l m" style="left:80px;top:331px;width:40px;height:23px;--k:1.01;"><span>CT</span></div>
<div class="a c l m" style="left:121px;top:331px;width:65px;height:23px;--k:1.094;"><span>2023-05-06</span></div>
<div class="a c l m" style="left:187px;top:331px;width:77px;height:23px;--k:1.13;"><span>0435152513</span></div>
<svg class="a" style="left:187px;top:331px" width="6" height="6"><path d="M0 0H5.5L0 5.5Z" fill="#1f7a3c"/></svg>
<div class="a c l m s" style="left:265px;top:331px;width:163px;height:23px;--k:0.92;"><span>GASKET KIT,</span></div>
<div class="a c l m s" style="left:429px;top:331px;width:53px;height:23px;--k:0.885;"><span>TOYOTA<br>MOTOR</span></div>
<div class="a c r m" style="left:483px;top:331px;width:36px;height:23px;--k:1.104;"><span>1</span></div>
<div class="a c r m" style="left:520px;top:331px;width:41px;height:23px;--k:1.104;"><span>1</span></div>
<div class="a c r m" style="left:562px;top:331px;width:45px;height:23px;--k:1.104;"><span>14</span></div>
<div class="a c r m" style="left:608px;top:331px;width:56px;height:23px;--k:0.99;"><span>YOUNG</span></div>
<div class="a c l m" style="left:665px;top:331px;width:52px;height:23px;--k:1.021;"><span>JSP01</span></div>
<div class="a c l b" style="left:718px;top:331px;width:150px;height:23px;--k:1.083;"><span>0435152513TBKCT0280003</span></div>
<div class="a c l b" style="left:869px;top:331px;width:37px;height:23px;--k:1.042;"><span>C2</span></div>
<div class="a c l b" style="left:907px;top:331px;width:74px;height:23px;--k:1.13;"><span>Allocated at<br>source, no</span></div>
<div class="a c r b" style="left:1051px;top:331px;width:77px;height:23px;--k:1.078;"><span>15-Jun-2023</span></div>
<div class="a rh" style="left:0;top:355px;height:24px"><span>88</span></div>
<div class="a" style="left:0;top:378px;width:20px;height:1px;background:#a6a6a6"></div>
<div class="a c l m" style="left:20px;top:355px;width:59px;height:23px;--k:1.01;"><span>TLBSV478</span></div>
<div class="a c l m" style="left:80px;top:355px;width:40px;height:23px;--k:1.01;"><span>SV</span></div>
<div class="a c l m" style="left:121px;top:355px;width:65px;height:23px;--k:1.094;"><span>2023-04-25</span></div>
<div class="a c l m" style="left:187px;top:355px;width:77px;height:23px;--k:1.13;"><span>04351B0060</span></div>
<div class="a c l m s" style="left:265px;top:355px;width:163px;height:23px;--k:0.92;"><span>GASKET KIT, AUTOMATIC TRANS<br>OVERHAUL</span></div>
<div class="a c l m s" style="left:429px;top:355px;width:53px;height:23px;--k:0.885;"><span>TOYOTA<br>MOTOR</span></div>
<div class="a c r m" style="left:483px;top:355px;width:36px;height:23px;--k:1.104;"><span>1</span></div>
<div class="a c r m" style="left:520px;top:355px;width:41px;height:23px;--k:1.104;"><span>1</span></div>
<div class="a c r m" style="left:562px;top:355px;width:45px;height:23px;--k:1.104;"><span>25</span></div>
<div class="a c r m" style="left:608px;top:355px;width:56px;height:23px;--k:0.99;"><span>YOUNG</span></div>
<div class="a c l m" style="left:665px;top:355px;width:52px;height:23px;--k:1.021;"><span>JSP01</span></div>
<div class="a c l b" style="left:718px;top:355px;width:150px;height:23px;--k:1.083;"><span>04351B0060TLBSV4780018</span></div>
<div class="a c l b" style="left:869px;top:355px;width:37px;height:23px;--k:1.042;"><span>C2</span></div>
<div class="a c l b" style="left:907px;top:355px;width:74px;height:23px;--k:1.13;"><span>Allocated at<br>source, no</span></div>
<div class="a c r b" style="left:1051px;top:355px;width:77px;height:23px;--k:1.078;"><span>22-Jun-2023</span></div>
<div class="a rh" style="left:0;top:379px;height:24px"><span>89</span></div>
<div class="a" style="left:0;top:402px;width:20px;height:1px;background:#a6a6a6"></div>
<div class="a c l m" style="left:20px;top:379px;width:59px;height:23px;--k:1.01;"><span>TCOCT175</span></div>
<div class="a c l m" style="left:80px;top:379px;width:40px;height:23px;--k:1.01;"><span>CT</span></div>
<div class="a c l m" style="left:121px;top:379px;width:65px;height:23px;--k:1.094;"><span>2023-04-27</span></div>
<div class="a" style="left:187px;top:378px;width:77px;height:24px;background:#ffc7ce"></div>
<div class="a c l m pk" style="left:187px;top:379px;width:77px;height:23px;--k:1.13;"><span>0442212020</span></div>
<svg class="a" style="left:187px;top:379px" width="6" height="6"><path d="M0 0H5.5L0 5.5Z" fill="#1f7a3c"/></svg>
<div class="a c l m s" style="left:265px;top:379px;width:163px;height:23px;--k:0.92;"><span>SEAL KIT, FR AXLE</span></div>
<div class="a c l m s" style="left:429px;top:379px;width:53px;height:23px;--k:0.885;"><span>TOYOTA<br>MOTOR</span></div>
<div class="a c r m" style="left:483px;top:379px;width:36px;height:23px;--k:1.104;"><span>2</span></div>
<div class="a c r m" style="left:520px;top:379px;width:41px;height:23px;--k:1.104;"><span>2</span></div>
<div class="a c r m" style="left:562px;top:379px;width:45px;height:23px;--k:1.104;"><span>23</span></div>
<div class="a c r m" style="left:608px;top:379px;width:56px;height:23px;--k:0.99;"><span>YOUNG</span></div>
<div class="a c l m" style="left:665px;top:379px;width:52px;height:23px;--k:1.021;"><span>JSP01</span></div>
<div class="a c l b" style="left:718px;top:379px;width:150px;height:23px;--k:1.083;"><span>0442212020TCOCT1750026</span></div>
<div class="a c l b" style="left:869px;top:379px;width:37px;height:23px;--k:1.042;"><span>C2</span></div>
<div class="a c l b" style="left:907px;top:379px;width:74px;height:23px;--k:1.13;"><span>Allocated at<br>source, no</span></div>
<div class="a c r b" style="left:1051px;top:379px;width:77px;height:23px;--k:1.078;"><span>14-Jun-2023</span></div>
<div class="a rh" style="left:0;top:402px;height:25px;background:#262626;border-right:2px solid #217346"><span style="right:-2px">90</span></div>
<div class="a c l m" style="left:20px;top:403px;width:59px;height:23px;--k:1.01;"><span>TCOCT175</span></div>
<div class="a c l m" style="left:80px;top:403px;width:40px;height:23px;--k:1.01;"><span>CT</span></div>
<div class="a c l m" style="left:121px;top:403px;width:65px;height:23px;--k:1.094;"><span>2023-04-27</span></div>
<div class="a" style="left:187px;top:402px;width:77px;height:24px;background:#ffc7ce"></div>
<div class="a c l m pk" style="left:187px;top:403px;width:77px;height:23px;--k:1.13;"><span>0442212020</span></div>
<svg class="a" style="left:187px;top:403px" width="6" height="6"><path d="M0 0H5.5L0 5.5Z" fill="#1f7a3c"/></svg>
<div class="a c l m s" style="left:265px;top:403px;width:163px;height:23px;--k:0.92;"><span>SEAL KIT, FR AXLE</span></div>
<div class="a c l m s" style="left:429px;top:403px;width:53px;height:23px;--k:0.885;"><span>TOYOTA<br>MOTOR</span></div>
<div class="a c r m" style="left:483px;top:403px;width:36px;height:23px;--k:1.104;"><span>2</span></div>
<div class="a c r m" style="left:520px;top:403px;width:41px;height:23px;--k:1.104;"><span>2</span></div>
<div class="a c r m" style="left:562px;top:403px;width:45px;height:23px;--k:1.104;"><span>23</span></div>
<div class="a c r m" style="left:608px;top:403px;width:56px;height:23px;--k:0.99;"><span>YOUNG</span></div>
<div class="a c l m" style="left:665px;top:403px;width:52px;height:23px;--k:1.021;"><span>JSP01</span></div>
<div class="a c l b" style="left:718px;top:403px;width:150px;height:23px;--k:1.083;"><span>0442212020TCOCT1750024</span></div>
<div class="a c l b" style="left:869px;top:403px;width:37px;height:23px;--k:1.042;"><span>C2</span></div>
<div class="a c l b" style="left:907px;top:403px;width:74px;height:23px;--k:1.13;"><span>Allocated at<br>source, no</span></div>
<div class="a c r b" style="left:1051px;top:403px;width:77px;height:23px;--k:1.078;"><span>14-Jun-2023</span></div>
<div class="a rh" style="left:0;top:427px;height:24px"><span>91</span></div>
<div class="a" style="left:0;top:450px;width:20px;height:1px;background:#a6a6a6"></div>
<div class="a c l m" style="left:20px;top:427px;width:59px;height:23px;--k:1.01;"><span>TCOCT175</span></div>
<div class="a c l m" style="left:80px;top:427px;width:40px;height:23px;--k:1.01;"><span>CT</span></div>
<div class="a c l m" style="left:121px;top:427px;width:65px;height:23px;--k:1.094;"><span>2023-04-27</span></div>
<div class="a" style="left:187px;top:426px;width:77px;height:24px;background:#ffc7ce"></div>
<div class="a c l m pk" style="left:187px;top:427px;width:77px;height:23px;--k:1.13;"><span>0442212020</span></div>
<svg class="a" style="left:187px;top:427px" width="6" height="6"><path d="M0 0H5.5L0 5.5Z" fill="#1f7a3c"/></svg>
<div class="a c l m s" style="left:265px;top:427px;width:163px;height:23px;--k:0.92;"><span>SEAL KIT, FR AXLE</span></div>
<div class="a c l m s" style="left:429px;top:427px;width:53px;height:23px;--k:0.885;"><span>TOYOTA<br>MOTOR</span></div>
<div class="a c r m" style="left:483px;top:427px;width:36px;height:23px;--k:1.104;"><span>2</span></div>
<div class="a c r m" style="left:520px;top:427px;width:41px;height:23px;--k:1.104;"><span>2</span></div>
<div class="a c r m" style="left:562px;top:427px;width:45px;height:23px;--k:1.104;"><span>23</span></div>
<div class="a c r m" style="left:608px;top:427px;width:56px;height:23px;--k:0.99;"><span>YOUNG</span></div>
<div class="a c l m" style="left:665px;top:427px;width:52px;height:23px;--k:1.021;"><span>JSP01</span></div>
<div class="a c l b" style="left:718px;top:427px;width:150px;height:23px;--k:1.083;"><span>0442212020TCOCT1750023</span></div>
<div class="a c l b" style="left:869px;top:427px;width:37px;height:23px;--k:1.042;"><span>C2</span></div>
<div class="a c l b" style="left:907px;top:427px;width:74px;height:23px;--k:1.13;"><span>Allocated at<br>source, no</span></div>
<div class="a c r b" style="left:1051px;top:427px;width:77px;height:23px;--k:1.078;"><span>14-Jun-2023</span></div>
<div class="a rh" style="left:0;top:451px;height:24px"><span>92</span></div>
<div class="a" style="left:0;top:474px;width:20px;height:1px;background:#a6a6a6"></div>
<div class="a c l m" style="left:20px;top:451px;width:59px;height:23px;--k:1.01;"><span>TCOCT175</span></div>
<div class="a c l m" style="left:80px;top:451px;width:40px;height:23px;--k:1.01;"><span>CT</span></div>
<div class="a c l m" style="left:121px;top:451px;width:65px;height:23px;--k:1.094;"><span>2023-04-27</span></div>
<div class="a" style="left:187px;top:450px;width:77px;height:24px;background:#ffc7ce"></div>
<div class="a c l m pk" style="left:187px;top:451px;width:77px;height:23px;--k:1.13;"><span>0442212020</span></div>
<svg class="a" style="left:187px;top:451px" width="6" height="6"><path d="M0 0H5.5L0 5.5Z" fill="#1f7a3c"/></svg>
<div class="a c l m s" style="left:265px;top:451px;width:163px;height:23px;--k:0.92;"><span>SEAL KIT, FR AXLE</span></div>
<div class="a c l m s" style="left:429px;top:451px;width:53px;height:23px;--k:0.885;"><span>TOYOTA<br>MOTOR</span></div>
<div class="a c r m" style="left:483px;top:451px;width:36px;height:23px;--k:1.104;"><span>2</span></div>
<div class="a c r m" style="left:520px;top:451px;width:41px;height:23px;--k:1.104;"><span>2</span></div>
<div class="a c r m" style="left:562px;top:451px;width:45px;height:23px;--k:1.104;"><span>23</span></div>
<div class="a c r m" style="left:608px;top:451px;width:56px;height:23px;--k:0.99;"><span>YOUNG</span></div>
<div class="a c l m" style="left:665px;top:451px;width:52px;height:23px;--k:1.021;"><span>JSP01</span></div>
<div class="a c l b" style="left:718px;top:451px;width:150px;height:23px;--k:1.083;"><span>0442212020TCOCT1750022</span></div>
<div class="a c l b" style="left:869px;top:451px;width:37px;height:23px;--k:1.042;"><span>C2</span></div>
<div class="a c l b" style="left:907px;top:451px;width:74px;height:23px;--k:1.13;"><span>Allocated at<br>source, no</span></div>
<div class="a c r b" style="left:1051px;top:451px;width:77px;height:23px;--k:1.078;"><span>14-Jun-2023</span></div>
<div class="a rh" style="left:0;top:475px;height:24px"><span>93</span></div>
<div class="a" style="left:0;top:498px;width:20px;height:1px;background:#a6a6a6"></div>
<div class="a c l m" style="left:20px;top:475px;width:59px;height:23px;--k:1.01;"><span>TCOCT175</span></div>
<div class="a c l m" style="left:80px;top:475px;width:40px;height:23px;--k:1.01;"><span>CT</span></div>
<div class="a c l m" style="left:121px;top:475px;width:65px;height:23px;--k:1.094;"><span>2023-04-27</span></div>
<div class="a" style="left:187px;top:474px;width:77px;height:24px;background:#ffc7ce"></div>
<div class="a c l m pk" style="left:187px;top:475px;width:77px;height:23px;--k:1.13;"><span>0442212020</span></div>
<svg class="a" style="left:187px;top:475px" width="6" height="6"><path d="M0 0H5.5L0 5.5Z" fill="#1f7a3c"/></svg>
<div class="a c l m s" style="left:265px;top:475px;width:163px;height:23px;--k:0.92;"><span>SEAL KIT, FR AXLE</span></div>
<div class="a c l m s" style="left:429px;top:475px;width:53px;height:23px;--k:0.885;"><span>TOYOTA<br>MOTOR</span></div>
<div class="a c r m" style="left:483px;top:475px;width:36px;height:23px;--k:1.104;"><span>2</span></div>
<div class="a c r m" style="left:520px;top:475px;width:41px;height:23px;--k:1.104;"><span>2</span></div>
<div class="a c r m" style="left:562px;top:475px;width:45px;height:23px;--k:1.104;"><span>23</span></div>
<div class="a c r m" style="left:608px;top:475px;width:56px;height:23px;--k:0.99;"><span>YOUNG</span></div>
<div class="a c l m" style="left:665px;top:475px;width:52px;height:23px;--k:1.021;"><span>JSP01</span></div>
<div class="a c l b" style="left:718px;top:475px;width:150px;height:23px;--k:1.083;"><span>0442212020TCOCT1750025</span></div>
<div class="a c l b" style="left:869px;top:475px;width:37px;height:23px;--k:1.042;"><span>C2</span></div>
<div class="a c l b" style="left:907px;top:475px;width:74px;height:23px;--k:1.13;"><span>Allocated at<br>source, no</span></div>
<div class="a c r b" style="left:1051px;top:475px;width:77px;height:23px;--k:1.078;"><span>14-Jun-2023</span></div>
<div class="a rh" style="left:0;top:499px;height:24px"><span>94</span></div>
<div class="a" style="left:0;top:522px;width:20px;height:1px;background:#a6a6a6"></div>
<div class="a c l m" style="left:20px;top:499px;width:59px;height:23px;--k:1.01;"><span>TCLSV865</span></div>
<div class="a c l m" style="left:80px;top:499px;width:40px;height:23px;--k:1.01;"><span>SV</span></div>
<div class="a c l m" style="left:121px;top:499px;width:65px;height:23px;--k:1.094;"><span>2023-04-20</span></div>
<div class="a c l m" style="left:187px;top:499px;width:77px;height:23px;--k:1.13;"><span>0442712121</span></div>
<svg class="a" style="left:187px;top:499px" width="6" height="6"><path d="M0 0H5.5L0 5.5Z" fill="#1f7a3c"/></svg>
<div class="a c l m s" style="left:265px;top:499px;width:163px;height:23px;--k:0.92;"><span>BOOT KIT, FR DRIVE</span></div>
<div class="a c l m s" style="left:429px;top:499px;width:53px;height:23px;--k:0.885;"><span>TOYOTA<br>MOTOR</span></div>
<div class="a c r m" style="left:483px;top:499px;width:36px;height:23px;--k:1.104;"><span>2</span></div>
<div class="a c r m" style="left:520px;top:499px;width:41px;height:23px;--k:1.104;"><span>2</span></div>
<div class="a c r m" style="left:562px;top:499px;width:45px;height:23px;--k:1.104;"><span>30</span></div>
<div class="a c r m" style="left:608px;top:499px;width:56px;height:23px;--k:0.99;"><span>YOUNG</span></div>
<div class="a c l m" style="left:665px;top:499px;width:52px;height:23px;--k:1.021;"><span>JSP01</span></div>
<div class="a c l b" style="left:718px;top:499px;width:150px;height:23px;--k:1.083;"><span>0442712121TCLSV8650002</span></div>
<div class="a c l b" style="left:869px;top:499px;width:37px;height:23px;--k:1.042;"><span>C1</span></div>
<div class="a c l b" style="left:907px;top:499px;width:74px;height:23px;--k:1.13;"><span>In-transit from<br>source,</span></div>
<div class="a c l b" style="left:982px;top:499px;width:68px;height:23px;--k:1.031;"><span>SPX9460</span></div>
<div class="a c r b" style="left:1051px;top:499px;width:77px;height:23px;--k:1.078;"><span>8-Jun-2023</span></div>
<div class="a rh" style="left:0;top:523px;height:24px"><span>95</span></div>
<div class="a" style="left:0;top:546px;width:20px;height:1px;background:#a6a6a6"></div>
<div class="a c l m" style="left:20px;top:523px;width:59px;height:23px;--k:1.01;"><span>TOTSV927</span></div>
<div class="a c l m" style="left:80px;top:523px;width:40px;height:23px;--k:1.01;"><span>SV</span></div>
<div class="a c l m" style="left:121px;top:523px;width:65px;height:23px;--k:1.094;"><span>2023-05-17</span></div>
<div class="a c l m" style="left:187px;top:523px;width:77px;height:23px;--k:1.13;"><span>0442744061</span></div>
<svg class="a" style="left:187px;top:523px" width="6" height="6"><path d="M0 0H5.5L0 5.5Z" fill="#1f7a3c"/></svg>
<div class="a c l m s" style="left:265px;top:523px;width:163px;height:23px;--k:0.92;"><span>BOOT KIT,FR DRIVE SHAFT IN &amp; OUT<br>JT.RH</span></div>
<div class="a c l m s" style="left:429px;top:523px;width:53px;height:23px;--k:0.885;"><span>TOYOTA<br>MOTOR</span></div>
<div class="a c r m" style="left:483px;top:523px;width:36px;height:23px;--k:1.104;"><span>1</span></div>
<div class="a c r m" style="left:520px;top:523px;width:41px;height:23px;--k:1.104;"><span>1</span></div>
<div class="a c r m" style="left:562px;top:523px;width:45px;height:23px;--k:1.104;"><span>3</span></div>
<div class="a c r m" style="left:608px;top:523px;width:56px;height:23px;--k:0.99;"><span>YOUNG</span></div>
<div class="a c l m" style="left:665px;top:523px;width:52px;height:23px;--k:1.021;"><span>JSP01</span></div>
<div class="a c l b" style="left:718px;top:523px;width:150px;height:23px;--k:1.083;"><span>0442744061TOTSV9270009</span></div>
<div class="a c l b" style="left:869px;top:523px;width:37px;height:23px;--k:1.042;"><span>C3</span></div>
<div class="a c l b" style="left:907px;top:523px;width:74px;height:23px;--k:1.13;"><span>With stock at<br>source,</span></div>
<div class="a rh" style="left:0;top:547px;height:24px"><span>96</span></div>
<div class="a" style="left:0;top:570px;width:20px;height:1px;background:#a6a6a6"></div>
<div class="a c l m" style="left:20px;top:547px;width:59px;height:23px;--k:1.01;"><span>TMIVO939</span></div>
<div class="a c l m" style="left:80px;top:547px;width:40px;height:23px;--k:1.01;"><span>VO</span></div>
<div class="a c l m" style="left:121px;top:547px;width:65px;height:23px;--k:1.094;"><span>2023-05-13</span></div>
<div class="a c l m" style="left:187px;top:547px;width:77px;height:23px;--k:1.13;"><span>0442758082</span></div>
<svg class="a" style="left:187px;top:547px" width="6" height="6"><path d="M0 0H5.5L0 5.5Z" fill="#1f7a3c"/></svg>
<div class="a c l m s" style="left:265px;top:547px;width:163px;height:23px;--k:0.92;"><span>BOOT KIT, FR DRIVE SHAFT IN &amp; OUT<br>JT. RH</span></div>
<div class="a c l m s" style="left:429px;top:547px;width:53px;height:23px;--k:0.885;"><span>TOYOTA<br>MOTOR</span></div>
<div class="a c r m" style="left:483px;top:547px;width:36px;height:23px;--k:1.104;"><span>1</span></div>
<div class="a c r m" style="left:520px;top:547px;width:41px;height:23px;--k:1.104;"><span>1</span></div>
<div class="a c r m" style="left:562px;top:547px;width:45px;height:23px;--k:1.104;"><span>7</span></div>
<div class="a c r m" style="left:608px;top:547px;width:56px;height:23px;--k:0.99;"><span>YOUNG</span></div>
<div class="a c l m" style="left:665px;top:547px;width:52px;height:23px;--k:1.021;"><span>JSP01</span></div>
<div class="a c l b" style="left:718px;top:547px;width:150px;height:23px;--k:1.083;"><span>0442758082TMIVO9390020</span></div>
<div class="a c l b" style="left:869px;top:547px;width:37px;height:23px;--k:1.042;"><span>C1</span></div>
<div class="a c l b" style="left:907px;top:547px;width:74px;height:23px;--k:1.13;"><span>Arrived at PH<br>port, for</span></div>
<div class="a c l b" style="left:982px;top:547px;width:68px;height:23px;--k:1.031;"><span>APX6000</span></div>
<div class="a c r b" style="left:1129px;top:547px;width:92px;height:23px;--k:1.078;"><span>26-May-2023</span></div>
<div class="a rh" style="left:0;top:571px;height:24px"><span>97</span></div>
<div class="a" style="left:0;top:594px;width:20px;height:1px;background:#a6a6a6"></div>
<div class="a c l m" style="left:20px;top:571px;width:59px;height:23px;--k:1.01;"><span>TDMVO183</span></div>
<div class="a c l m" style="left:80px;top:571px;width:40px;height:23px;--k:1.01;"><span>VO</span></div>
<div class="a c l m" style="left:121px;top:571px;width:65px;height:23px;--k:1.094;"><span>2023-05-15</span></div>
<div class="a c l m" style="left:187px;top:571px;width:77px;height:23px;--k:1.13;"><span>0442812701</span></div>
<svg class="a" style="left:187px;top:571px" width="6" height="6"><path d="M0 0H5.5L0 5.5Z" fill="#1f7a3c"/></svg>
<div class="a c l m s" style="left:265px;top:571px;width:163px;height:23px;--k:0.92;"><span>BOOT KIT, FR DRIVE</span></div>
<div class="a c l m s" style="left:429px;top:571px;width:53px;height:23px;--k:0.885;"><span>TOYOTA<br>MOTOR</span></div>
<div class="a c r m" style="left:483px;top:571px;width:36px;height:23px;--k:1.104;"><span>1</span></div>
<div class="a c r m" style="left:520px;top:571px;width:41px;height:23px;--k:1.104;"><span>1</span></div>
<div class="a c r m" style="left:562px;top:571px;width:45px;height:23px;--k:1.104;"><span>5</span></div>
<div class="a c r m" style="left:608px;top:571px;width:56px;height:23px;--k:0.99;"><span>YOUNG</span></div>
<div class="a c l m" style="left:665px;top:571px;width:52px;height:23px;--k:1.021;"><span>JSP01</span></div>
<div class="a c l b" style="left:718px;top:571px;width:150px;height:23px;--k:1.083;"><span>0442812701TDMVO1830005</span></div>
<div class="a c l b" style="left:869px;top:571px;width:37px;height:23px;--k:1.042;"><span>C1</span></div>
<div class="a c l b" style="left:907px;top:571px;width:74px;height:23px;--k:1.13;"><span>Arrived at PH<br>port, for</span></div>
<div class="a c l b" style="left:982px;top:571px;width:68px;height:23px;--k:1.031;"><span>APX6074</span></div>
<div class="a c r b" style="left:1129px;top:571px;width:92px;height:23px;--k:1.078;"><span>29-May-2023</span></div>
<div class="a rh" style="left:0;top:595px;height:24px"><span>98</span></div>
<div class="a" style="left:0;top:618px;width:20px;height:1px;background:#a6a6a6"></div>
<div class="a c l m" style="left:20px;top:595px;width:59px;height:23px;--k:1.01;"><span>TCMSV905</span></div>
<div class="a c l m" style="left:80px;top:595px;width:40px;height:23px;--k:1.01;"><span>SV</span></div>
<div class="a c l m" style="left:121px;top:595px;width:65px;height:23px;--k:1.094;"><span>2023-05-02</span></div>
<div class="a c l m" style="left:187px;top:595px;width:77px;height:23px;--k:1.13;"><span>0442842090</span></div>
<svg class="a" style="left:187px;top:595px" width="6" height="6"><path d="M0 0H5.5L0 5.5Z" fill="#1f7a3c"/></svg>
<div class="a c l m s" style="left:265px;top:595px;width:163px;height:23px;--k:0.92;"><span>BOOT KIT, FR DRIVE</span></div>
<div class="a c l m s" style="left:429px;top:595px;width:53px;height:23px;--k:0.885;"><span>TOYOTA<br>MOTOR</span></div>
<div class="a c r m" style="left:483px;top:595px;width:36px;height:23px;--k:1.104;"><span>2</span></div>
<div class="a c r m" style="left:520px;top:595px;width:41px;height:23px;--k:1.104;"><span>1</span></div>
<div class="a c r m" style="left:562px;top:595px;width:45px;height:23px;--k:1.104;"><span>18</span></div>
<div class="a c r m" style="left:608px;top:595px;width:56px;height:23px;--k:0.99;"><span>YOUNG</span></div>
<div class="a c l m" style="left:665px;top:595px;width:52px;height:23px;--k:1.021;"><span>JSP01</span></div>
<div class="a c l b" style="left:718px;top:595px;width:150px;height:23px;--k:1.083;"><span>0442842090TCMSV9050013</span></div>
<div class="a c l b" style="left:869px;top:595px;width:37px;height:23px;--k:1.042;"><span>C1</span></div>
<div class="a c l b" style="left:907px;top:595px;width:74px;height:23px;--k:1.13;"><span>In-transit from<br>source,</span></div>
<div class="a c l b" style="left:982px;top:595px;width:68px;height:23px;--k:1.031;"><span>SPX9633</span></div>
<div class="a c r b" style="left:1051px;top:595px;width:77px;height:23px;--k:1.078;"><span>15-Jun-2023</span></div>
<div class="a rh" style="left:0;top:619px;height:24px"><span>99</span></div>
<div class="a" style="left:0;top:642px;width:20px;height:1px;background:#a6a6a6"></div>
<div class="a c l m" style="left:20px;top:619px;width:59px;height:23px;--k:1.01;"><span>TMISV443</span></div>
<div class="a c l m" style="left:80px;top:619px;width:40px;height:23px;--k:1.01;"><span>SV</span></div>
<div class="a c l m" style="left:121px;top:619px;width:65px;height:23px;--k:1.094;"><span>2023-04-26</span></div>
<div class="a" style="left:187px;top:618px;width:77px;height:24px;background:#ffc7ce"></div>
<div class="a c l m pk" style="left:187px;top:619px;width:77px;height:23px;--k:1.13;"><span>0442842111</span></div>
<svg class="a" style="left:187px;top:619px" width="6" height="6"><path d="M0 0H5.5L0 5.5Z" fill="#1f7a3c"/></svg>
<div class="a c l m s" style="left:265px;top:619px;width:163px;height:23px;--k:0.92;"><span>BOOT KIT, FR DRIVE SHAFT IN &amp; OUT<br>JT. LH</span></div>
<div class="a c l m s" style="left:429px;top:619px;width:53px;height:23px;--k:0.885;"><span>TOYOTA<br>MOTOR</span></div>
<div class="a c r m" style="left:483px;top:619px;width:36px;height:23px;--k:1.104;"><span>1</span></div>
<div class="a c r m" style="left:520px;top:619px;width:41px;height:23px;--k:1.104;"><span>1</span></div>
<div class="a c r m" style="left:562px;top:619px;width:45px;height:23px;--k:1.104;"><span>24</span></div>
<div class="a c r m" style="left:608px;top:619px;width:56px;height:23px;--k:0.99;"><span>YOUNG</span></div>
<div class="a c l m" style="left:665px;top:619px;width:52px;height:23px;--k:1.021;"><span>JSP01</span></div>
<div class="a c l b" style="left:718px;top:619px;width:150px;height:23px;--k:1.083;"><span>0442842111TMISV4430005</span></div>
<div class="a c l b" style="left:869px;top:619px;width:37px;height:23px;--k:1.042;"><span>C1</span></div>
<div class="a c l b" style="left:907px;top:619px;width:74px;height:23px;--k:1.13;"><span>In-transit from<br>source,</span></div>
<div class="a c l b" style="left:982px;top:619px;width:68px;height:23px;--k:1.031;"><span>SPX9460</span></div>
<div class="a c r b" style="left:1051px;top:619px;width:77px;height:23px;--k:1.078;"><span>8-Jun-2023</span></div>
<div class="a" style="left:1271px;top:401px;width:54px;height:27px;border:2px solid #217346"></div>
<div class="a" style="left:1320px;top:423px;width:6px;height:6px;background:#217346;border:1px solid #fff;border-right:0;border-bottom:0;box-sizing:content-box;width:5px;height:5px"></div>
<!-- right scrollbar -->
<div class="a" style="left:1345px;top:205px;width:15px;height:424px;background:#464646"></div>
<div class="a" style="left:1346px;top:192px;width:13px;height:12px;background:#d0d0d0"></div>
<svg class="a" style="left:1349px;top:196px" width="7" height="5"><path d="M0 4.300H7L3.500 0.300Z" fill="#222"/></svg>
<div class="a" style="left:1346px;top:224px;width:13px;height:15px;background:#d0d0d0"></div>
<div class="a" style="left:1346px;top:630px;width:13px;height:13px;background:#d0d0d0"></div>
<svg class="a" style="left:1349px;top:634.500px" width="7" height="5"><path d="M0 0.300H7L3.500 4.300Z" fill="#222"/></svg>
<!-- sheet tabs bar -->
<div class="a" style="left:0;top:644px;width:1363px;height:26px;background:#6a6a6a"></div>
<svg class="a" style="left:24.500px;top:654px" width="5" height="8"><path d="M4.600 0.200V7.800L0.300 4Z" fill="#a0a0a0"/></svg>
<svg class="a" style="left:53px;top:654px" width="5" height="8"><path d="M0.400 0.200V7.800L4.700 4Z" fill="#a0a0a0"/></svg>
<div class="a" style="left:97px;top:648px;width:1px;height:22px;background:#9a9a9a"></div>
<div class="a" style="left:111.600px;top:649px;font-size:12.5px;color:#ececec;line-height:18px;white-space:nowrap;transform:scaleX(1.011);transform-origin:left">001 Master TBL LTBO</div>
<div class="a" style="left:252px;top:648px;width:1px;height:22px;background:#9a9a9a"></div>
<div class="a" style="left:264.600px;top:649px;font-size:12.5px;color:#ececec;line-height:18px;white-space:nowrap;transform:scaleX(1.004);transform-origin:left">Sheet3</div>
<div class="a" style="left:317px;top:644px;width:59px;height:22px;background:#fff;border-bottom:2px solid #217346"></div>
<div class="a" style="left:317px;top:649px;width:59px;text-align:center;font-size:12.5px;font-weight:bold;color:#217346;line-height:18px;transform:scaleX(0.927)">JSP01</div>
<svg class="a" style="left:408px;top:649px" width="18" height="18"><circle cx="9" cy="9" r="7.3" fill="none" stroke="#f0f0f0" stroke-width="1.5"/><path d="M9 4.8V13.2M4.8 9H13.2" stroke="#f0f0f0" stroke-width="1.7"/></svg>
<!-- horizontal scrollbar -->
<div class="a" style="left:816px;top:653px;width:2px;height:2px;background:#f0f0f0;box-shadow:0 4px 0 #f0f0f0,0 8px 0 #f0f0f0"></div>
<div class="a" style="left:847px;top:651px;width:10px;height:15px;background:#484848"></div><div class="a" style="left:1323px;top:651px;width:2px;height:15px;background:#484848"></div>
<div class="a" style="left:834px;top:652px;width:13px;height:13px;background:#d0d0d0"></div>
<svg class="a" style="left:837.500px;top:655px" width="5" height="7"><path d="M4.600 0V7L0.300 3.500Z" fill="#222"/></svg>
<div class="a" style="left:857px;top:652px;width:466px;height:13px;background:#d0d0d0"></div>
<div class="a" style="left:1325px;top:652px;width:13px;height:13px;background:#d0d0d0"></div>
<svg class="a" style="left:1329.800px;top:655px" width="5" height="7"><path d="M0.300 0V7L4.600 3.500Z" fill="#222"/></svg>
</div></body></html>
